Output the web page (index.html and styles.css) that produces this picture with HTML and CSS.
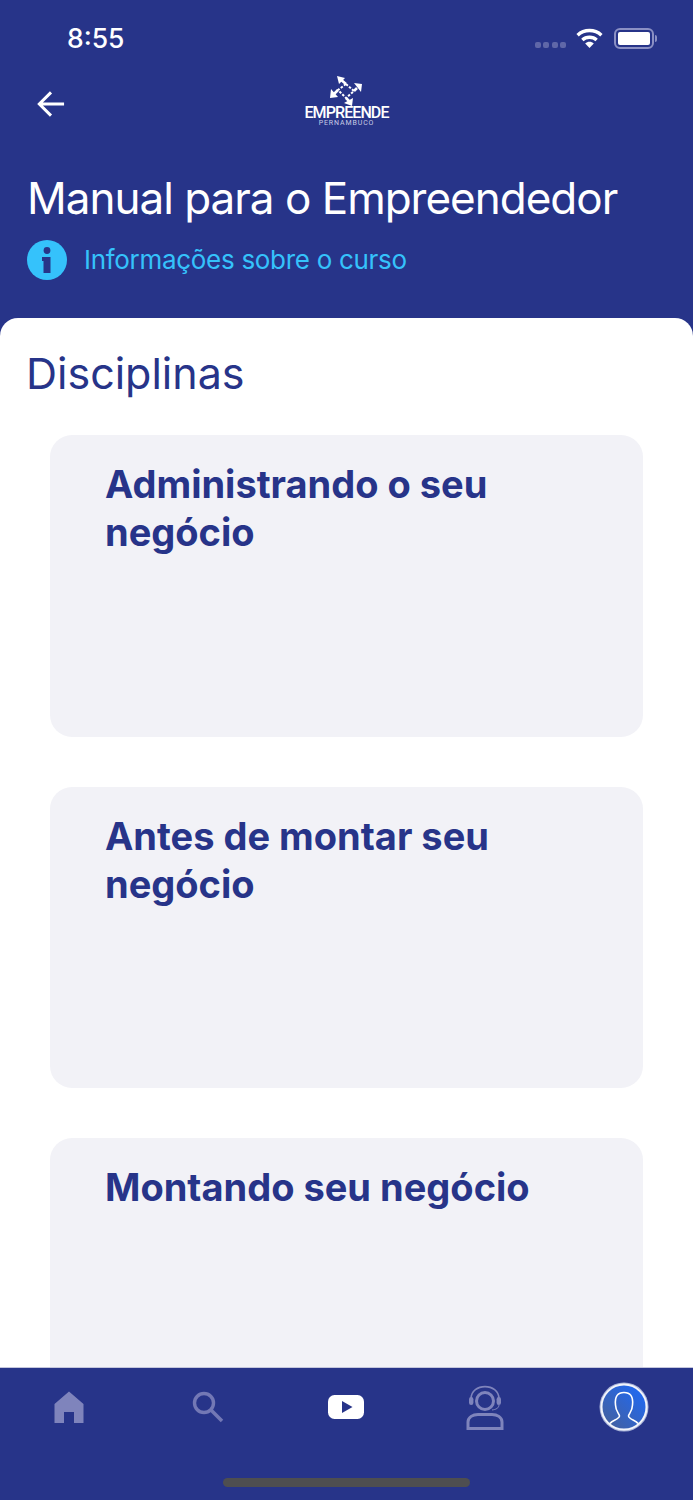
FILE: index.html
```html
<!DOCTYPE html>
<html lang="pt">
<head>
    <meta charset="UTF-8">
    <meta name="viewport" content="width=device-width, initial-scale=1.0">
    <title>Manual para o Empreendedor</title>
    <link rel="stylesheet" href="styles.css">
</head>
<body>
<div class="app">

    <!-- Cabeçalho -->
    <header class="header">
        <div class="status-bar">
            <span class="clock">8:55</span>
            <div class="status-icons">
                <div class="signal"><i></i><i></i><i></i><i></i></div>
                <svg class="wifi" width="27" height="20" viewBox="0 0 28 21">
                    <path d="M1.5 7.5C8.5 1 19.5 1 26.5 7.5" fill="none" stroke="#fff" stroke-width="3.6"/>
                    <path d="M6.5 12.5C10.5 8.8 17.5 8.8 21.5 12.5" fill="none" stroke="#fff" stroke-width="3.6"/>
                    <path d="M9.5 16.2C12 14 16 14 18.5 16.2L14 21Z" fill="#fff"/>
                </svg>
                <div class="battery"><div class="battery-fill"></div></div>
                <div class="battery-cap"></div>
            </div>
        </div>

        <div class="top-nav">
            <svg class="back" width="28" height="28" viewBox="0 0 30 30">
                <path d="M29 15H3M15 2.5L2.5 15L15 27.5" fill="none" stroke="#fff" stroke-width="3.2"/>
            </svg>
            <div class="logo">
                <svg width="32" height="30" viewBox="0 0 32 30">
                    <path d="M10 3L16 8M27 12L24 15M19 25L16 22M4 18L8 14" stroke="#fff" stroke-width="2.6"/>
                    <path d="M16 8L24 15L16 22L8 14Z" fill="none" stroke="#fff" stroke-width="2" stroke-dasharray="2.5 1.5"/>
                    <path d="M7 0L15 2L9 8ZM32 8L31 16L24 7ZM22 30L14 27L23 22ZM0 22L1 13L8 21Z" fill="#fff"/>
                </svg>
                <span class="logo-name">EMPREENDE</span>
                <span class="logo-sub">PERNAMBUCO</span>
            </div>
        </div>

        <h1 class="title">Manual para o Empreendedor</h1>
        <div class="info-link">
            <svg width="40" height="40" viewBox="0 0 40 40">
                <circle cx="20" cy="20" r="20" fill="#35c2fb"/>
                <circle cx="20" cy="10.5" r="3.4" fill="#273489"/>
                <path d="M15 17H23.5V33H16.5V21H15Z" fill="#273489"/>
            </svg>
            <span>Informações sobre o curso</span>
        </div>
    </header>

    <!-- Disciplinas -->
    <main class="sheet">
        <h2 class="sheet-title">Disciplinas</h2>
        <div class="card-list">
            <div class="card"><h3>Administrando o seu negócio</h3></div>
            <div class="card"><h3>Antes de montar seu negócio</h3></div>
            <div class="card"><h3>Montando seu negócio</h3></div>
        </div>
    </main>

    <!-- Barra de navegação -->
    <nav class="tabbar">
        <div class="tabs">
            <div class="tab">
                <svg width="30" height="32" viewBox="0 0 30 32">
                    <path d="M15 0.5L29.5 13V32H20V21H10V32H0.5V13Z" fill="#7f84bc"/>
                </svg>
            </div>
            <div class="tab">
                <svg width="32" height="32" viewBox="0 0 32 32">
                    <circle cx="12" cy="12" r="9.5" fill="none" stroke="#7378b5" stroke-width="3.4"/>
                    <path d="M19 19L30 30" stroke="#7378b5" stroke-width="3.6"/>
                </svg>
            </div>
            <div class="tab">
                <svg width="36" height="24" viewBox="0 0 36 24">
                    <rect width="36" height="24" rx="6.5" fill="#fff"/>
                    <path d="M14 6L24.5 12L14 18Z" fill="#273489"/>
                </svg>
            </div>
            <div class="tab">
                <svg width="38" height="45" viewBox="0 0 38 45">
                    <circle cx="19" cy="16" r="8.5" fill="none" stroke="#7f84bc" stroke-width="3"/>
                    <path d="M5 14C5 -2.5 33 -2.5 33 14" fill="none" stroke="#7f84bc" stroke-width="1.6"/>
                    <rect x="3" y="12" width="4.4" height="8" rx="2.2" fill="#7f84bc"/>
                    <rect x="30.6" y="12" width="4.4" height="8" rx="2.2" fill="#7f84bc"/>
                    <path d="M33 20C33 23 30 24.5 26 25" fill="none" stroke="#7f84bc" stroke-width="1"/>
                    <path d="M2 43.5V37C2 32 7 29.5 12 29.5H26C31 29.5 36 32 36 37V43.5Z" fill="none" stroke="#7f84bc" stroke-width="3"/>
                </svg>
            </div>
            <div class="tab">
                <svg width="50" height="50" viewBox="0 0 50 50">
                    <defs>
                        <linearGradient id="avatarBg" x1="1" y1="0" x2="0" y2="1">
                            <stop offset="0.1" stop-color="#1f69f4"/>
                            <stop offset="0.9" stop-color="#44609f"/>
                        </linearGradient>
                    </defs>
                    <circle cx="25" cy="25" r="24.5" fill="#a9b3d8"/>
                    <circle cx="25" cy="25" r="22.5" fill="url(#avatarBg)" stroke="#f2f4fb" stroke-width="2"/>
                    <path d="M11 41.5C13 38 20 37.5 20.5 34C20.5 32 16.5 29 16.5 23C15.5 14 19 10.5 25 10.5C31 10.5 34.5 14 33.5 23C33.5 29 29.5 32 29.5 34C30 37.5 37 38 39 41.5" fill="none" stroke="#fff" stroke-width="1.6"/>
                </svg>
            </div>
        </div>
        <div class="home-bar"></div>
    </nav>

</div>
</body>
</html>
```

FILE: styles.css
```css
* {
    box-sizing: border-box;
}

body {
    font-family: Inter, "Noto Sans", sans-serif;
    margin: 0;
    padding: 0;
    background-color: #273489;
}

.app {
    display: flex;
    flex-direction: column;
    height: 1500px;
    overflow: hidden;
}

/* Cabeçalho */
.header {
    background-color: #273489;
    color: #ffffff;
    height: 334px;
    flex-shrink: 0;
    padding: 0 27px;
}

.status-bar {
    display: flex;
    justify-content: space-between;
    align-items: center;
    height: 76px;
    padding: 0 9px 0 40px;
}

.clock {
    font-size: 26.5px;
    font-weight: 500;
    margin-top: -1px;
}

.status-icons {
    display: flex;
    align-items: center;
}

.signal {
    display: flex;
    gap: 2.3px;
    margin-top: 14px;
    margin-right: 10px;
}

.signal i {
    width: 6px;
    height: 6px;
    border-radius: 2px;
    background-color: #5f67a8;
}

.wifi {
    margin-right: 11px;
    margin-top: -1px;
}

.battery {
    width: 40px;
    height: 21px;
    border: 2px solid #8b90c4;
    border-radius: 6px;
    padding: 2px;
}

.battery-fill {
    height: 100%;
    background-color: #ffffff;
    border-radius: 2px;
}

.battery-cap {
    width: 2px;
    height: 7px;
    margin-left: 1px;
    border-radius: 0 2px 2px 0;
    background-color: #8b90c4;
}

.top-nav {
    position: relative;
    display: flex;
    justify-content: center;
    height: 52px;
}

.back {
    position: absolute;
    left: 10px;
    top: 14px;
}

.logo {
    display: flex;
    flex-direction: column;
    align-items: center;
}

.logo-name {
    font-family: Roboto, sans-serif;
    font-size: 16px;
    font-weight: 500;
    line-height: 14px;
    letter-spacing: -0.9px;
}

.logo-sub {
    font-family: Roboto, sans-serif;
    font-size: 7px;
    line-height: 7px;
    letter-spacing: 0.9px;
    color: #c9cce6;
}

.title {
    font-size: 44px;
    font-weight: 400;
    line-height: 54px;
    letter-spacing: -1px;
    margin: 43px 0 0;
    white-space: nowrap;
}

.info-link {
    display: flex;
    align-items: center;
    gap: 17px;
    margin-top: 15px;
    color: #35c2fb;
    font-size: 26px;
    letter-spacing: -0.3px;
}

.info-link span {
    margin-top: -2px;
}

/* Disciplinas */
.sheet {
    flex: 1;
    min-height: 0;
    margin-top: -16px;
    background-color: #ffffff;
    border-radius: 18px 18px 0 0;
    padding: 27px 50px 0;
    overflow: hidden;
}

.sheet-title {
    color: #273489;
    font-size: 43px;
    font-weight: 400;
    line-height: 56px;
    margin: 0 0 0 -24px;
}

.card-list {
    display: flex;
    flex-direction: column;
    gap: 50px;
    margin-top: 34px;
}

.card {
    background-color: #f2f2f7;
    border-radius: 22px;
    height: 301.5px;
    flex-shrink: 0;
    padding: 25px 55px;
}

.card h3 {
    color: #273489;
    font-size: 38px;
    font-weight: 700;
    line-height: 48px;
    margin: 0;
}

/* Barra de navegação */
.tabbar {
    flex-shrink: 0;
    height: 133px;
    background-color: #273489;
    border-top: 1px solid #c4c6dc;
}

.tabs {
    display: grid;
    grid-template-columns: repeat(5, 138.6px);
    align-items: center;
    height: 78px;
}

.tab {
    display: flex;
    justify-content: center;
    align-items: center;
}

.home-bar {
    width: 247px;
    height: 9px;
    margin: 32px auto 0;
    border-radius: 5px;
    background-color: #4e4e50;
}
```
